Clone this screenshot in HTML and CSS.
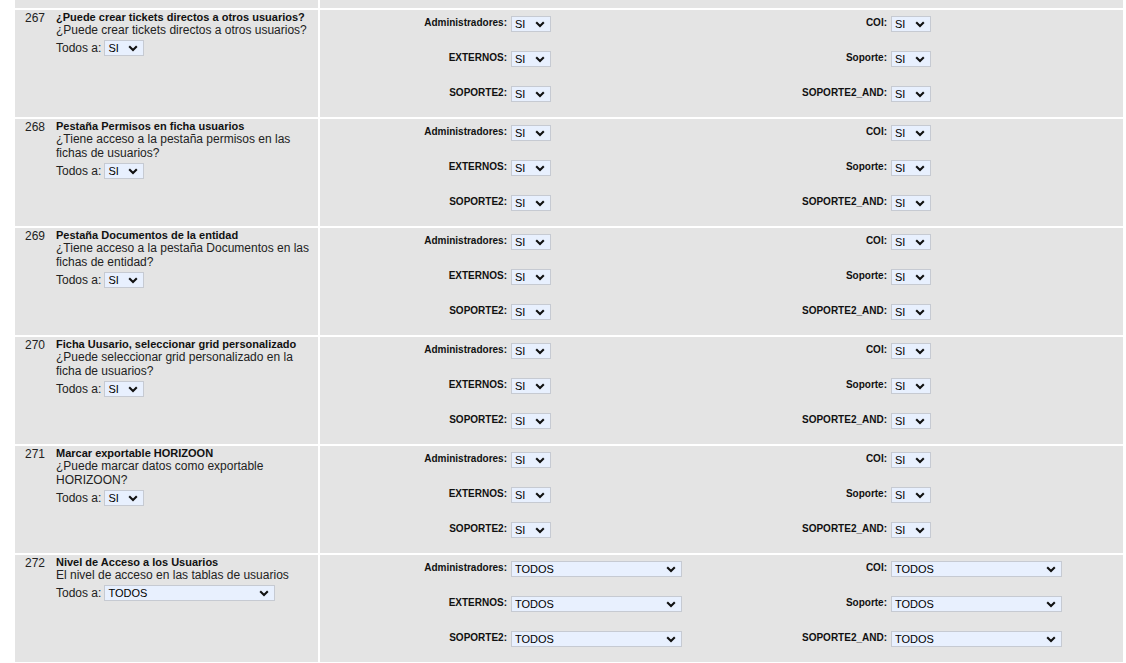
FILE: index.html
```html
<!DOCTYPE html>
<html lang="es">
<head>
    <meta charset="UTF-8">
    <title>Permisos</title>
    <link rel="stylesheet" href="styles.css">
</head>
<body>
    <div class="perm-table">
        <div class="cell tail"></div>
        <div class="cell tail"></div>

        <!-- 267 -->
        <div class="cell info">
            <div class="num">267</div>
            <div class="texts">
                <div class="title">¿Puede crear tickets directos a otros usuarios?</div>
                <div class="desc">¿Puede crear tickets directos a otros usuarios?</div>
                <div class="todos">Todos a: <select class="sel-si"><option>SI</option><option>NO</option></select></div>
            </div>
        </div>
        <div class="cell groups">
            <label>Administradores:</label><select class="sel-si"><option>SI</option><option>NO</option></select>
            <label>COI:</label><select class="sel-si"><option>SI</option><option>NO</option></select>
            <label>EXTERNOS:</label><select class="sel-si"><option>SI</option><option>NO</option></select>
            <label>Soporte:</label><select class="sel-si"><option>SI</option><option>NO</option></select>
            <label>SOPORTE2:</label><select class="sel-si"><option>SI</option><option>NO</option></select>
            <label>SOPORTE2_AND:</label><select class="sel-si"><option>SI</option><option>NO</option></select>
        </div>

        <!-- 268 -->
        <div class="cell info">
            <div class="num">268</div>
            <div class="texts">
                <div class="title">Pestaña Permisos en ficha usuarios</div>
                <div class="desc">¿Tiene acceso a la pestaña permisos en las fichas de usuarios?</div>
                <div class="todos">Todos a: <select class="sel-si"><option>SI</option><option>NO</option></select></div>
            </div>
        </div>
        <div class="cell groups">
            <label>Administradores:</label><select class="sel-si"><option>SI</option><option>NO</option></select>
            <label>COI:</label><select class="sel-si"><option>SI</option><option>NO</option></select>
            <label>EXTERNOS:</label><select class="sel-si"><option>SI</option><option>NO</option></select>
            <label>Soporte:</label><select class="sel-si"><option>SI</option><option>NO</option></select>
            <label>SOPORTE2:</label><select class="sel-si"><option>SI</option><option>NO</option></select>
            <label>SOPORTE2_AND:</label><select class="sel-si"><option>SI</option><option>NO</option></select>
        </div>

        <!-- 269 -->
        <div class="cell info">
            <div class="num">269</div>
            <div class="texts">
                <div class="title">Pestaña Documentos de la entidad</div>
                <div class="desc">¿Tiene acceso a la pestaña Documentos en las fichas de entidad?</div>
                <div class="todos">Todos a: <select class="sel-si"><option>SI</option><option>NO</option></select></div>
            </div>
        </div>
        <div class="cell groups">
            <label>Administradores:</label><select class="sel-si"><option>SI</option><option>NO</option></select>
            <label>COI:</label><select class="sel-si"><option>SI</option><option>NO</option></select>
            <label>EXTERNOS:</label><select class="sel-si"><option>SI</option><option>NO</option></select>
            <label>Soporte:</label><select class="sel-si"><option>SI</option><option>NO</option></select>
            <label>SOPORTE2:</label><select class="sel-si"><option>SI</option><option>NO</option></select>
            <label>SOPORTE2_AND:</label><select class="sel-si"><option>SI</option><option>NO</option></select>
        </div>

        <!-- 270 -->
        <div class="cell info">
            <div class="num">270</div>
            <div class="texts">
                <div class="title">Ficha Uusario, seleccionar grid personalizado</div>
                <div class="desc">¿Puede seleccionar grid personalizado en la ficha de usuarios?</div>
                <div class="todos">Todos a: <select class="sel-si"><option>SI</option><option>NO</option></select></div>
            </div>
        </div>
        <div class="cell groups">
            <label>Administradores:</label><select class="sel-si"><option>SI</option><option>NO</option></select>
            <label>COI:</label><select class="sel-si"><option>SI</option><option>NO</option></select>
            <label>EXTERNOS:</label><select class="sel-si"><option>SI</option><option>NO</option></select>
            <label>Soporte:</label><select class="sel-si"><option>SI</option><option>NO</option></select>
            <label>SOPORTE2:</label><select class="sel-si"><option>SI</option><option>NO</option></select>
            <label>SOPORTE2_AND:</label><select class="sel-si"><option>SI</option><option>NO</option></select>
        </div>

        <!-- 271 -->
        <div class="cell info">
            <div class="num">271</div>
            <div class="texts">
                <div class="title">Marcar exportable HORIZOON</div>
                <div class="desc">¿Puede marcar datos como exportable HORIZOON?</div>
                <div class="todos">Todos a: <select class="sel-si"><option>SI</option><option>NO</option></select></div>
            </div>
        </div>
        <div class="cell groups">
            <label>Administradores:</label><select class="sel-si"><option>SI</option><option>NO</option></select>
            <label>COI:</label><select class="sel-si"><option>SI</option><option>NO</option></select>
            <label>EXTERNOS:</label><select class="sel-si"><option>SI</option><option>NO</option></select>
            <label>Soporte:</label><select class="sel-si"><option>SI</option><option>NO</option></select>
            <label>SOPORTE2:</label><select class="sel-si"><option>SI</option><option>NO</option></select>
            <label>SOPORTE2_AND:</label><select class="sel-si"><option>SI</option><option>NO</option></select>
        </div>

        <!-- 272 -->
        <div class="cell info">
            <div class="num">272</div>
            <div class="texts">
                <div class="title">Nivel de Acceso a los Usuarios</div>
                <div class="desc">El nivel de acceso en las tablas de usuarios</div>
                <div class="todos">Todos a: <select class="sel-nivel"><option>TODOS</option><option>PROPIOS</option><option>NINGUNO</option></select></div>
            </div>
        </div>
        <div class="cell groups">
            <label>Administradores:</label><select class="sel-nivel"><option>TODOS</option><option>PROPIOS</option></select>
            <label>COI:</label><select class="sel-nivel"><option>TODOS</option><option>PROPIOS</option></select>
            <label>EXTERNOS:</label><select class="sel-nivel"><option>TODOS</option><option>PROPIOS</option></select>
            <label>Soporte:</label><select class="sel-nivel"><option>TODOS</option><option>PROPIOS</option></select>
            <label>SOPORTE2:</label><select class="sel-nivel"><option>TODOS</option><option>PROPIOS</option></select>
            <label>SOPORTE2_AND:</label><select class="sel-nivel"><option>TODOS</option><option>PROPIOS</option></select>
        </div>
    </div>
</body>
</html>
```

FILE: styles.css
```css
body {
    margin: 0;
    background-color: #fff;
    font-family: "Liberation Sans", Arial, sans-serif;
    color: #222;
}
.perm-table {
    display: grid;
    grid-template-columns: 303px 803px;
    grid-template-rows: 8px;
    grid-auto-rows: 107px;
    gap: 2px;
    margin-left: 15px;
    width: 1108px;
}
.cell {
    background-color: #e4e4e4;
    box-sizing: border-box;
}
.info {
    display: flex;
    padding: 1px 0 0 10px;
}
.num {
    width: 31px;
    font-size: 12px;
    line-height: 14px;
    flex-shrink: 0;
}
.texts {
    width: 260px;
}
.title {
    font-size: 11px;
    font-weight: bold;
    line-height: 12px;
    color: #111;
}
.desc {
    font-size: 12px;
    line-height: 14px;
}
.todos {
    display: flex;
    align-items: center;
    gap: 3px;
    margin-top: 3px;
    font-size: 12px;
}
.groups {
    display: grid;
    grid-template-columns: 187px 190px 182px 1fr;
    grid-auto-rows: 16px;
    column-gap: 4px;
    row-gap: 19px;
    padding-top: 6px;
    align-items: start;
}
.groups label {
    text-align: right;
    font-size: 10px;
    font-weight: bold;
    color: #111;
    padding-top: 1px;
}
select {
    -webkit-appearance: none;
    appearance: none;
    height: 16px;
    box-sizing: border-box;
    font-family: "Liberation Sans", Arial, sans-serif;
    font-size: 11px;
    line-height: 14px;
    color: #000;
    background: #e8f0fe url("data:image/svg+xml,%3Csvg xmlns='http://www.w3.org/2000/svg' width='10' height='7' viewBox='0 0 10 7'%3E%3Cpath d='M1.2 1.3 L5 5 L8.8 1.3' fill='none' stroke='%23111' stroke-width='2.1'/%3E%3C/svg%3E") no-repeat right 5px center;
    border: 1px solid #c6cad2;
    border-radius: 0;
    padding: 0 0 0 3px;
    margin: 0;
}
.sel-si {
    width: 40px;
}
.sel-nivel {
    width: 171px;
}
```
